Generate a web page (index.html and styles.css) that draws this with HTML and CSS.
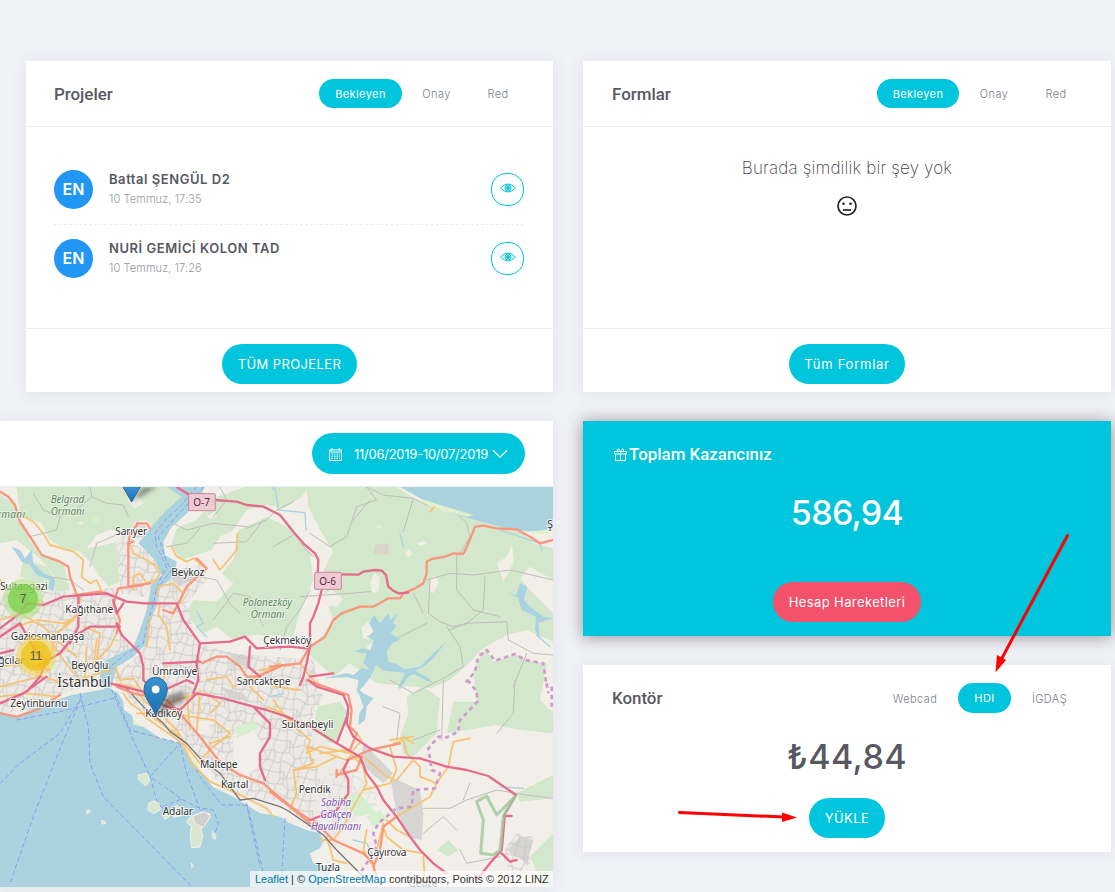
FILE: index.html
```html
<!DOCTYPE html>
<html lang="tr">
<head>
<meta charset="utf-8">
<title>Panel</title>
<link rel="stylesheet" href="styles.css">
</head>
<body>
<main class="page">
  <div class="col col-left">
    <section class="card projects">
      <header class="card-head">
        <h2 class="title">Projeler</h2>
        <nav class="tabs"><a class="tab active wide">Bekleyen</a><a class="tab onay">Onay</a><a class="tab red">Red</a></nav>
      </header>
      <div class="card-body list">
        <div class="item">
          <span class="avatar">EN</span>
          <div class="info"><span class="name">Battal ŞENGÜL D2</span><span class="date">10 Temmuz, 17:35</span></div>
          <a class="eye"><svg width="16" height="10" viewBox="0 0 16 10"><path d="M.6 5Q8-3 15.400 5Q8 13 .6 5Z"/><circle cx="8" cy="5" r="3"/><circle class="dot" cx="8" cy="5" r="1.400"/></svg></a>
        </div>
        <div class="item">
          <span class="avatar">EN</span>
          <div class="info"><span class="name">NURİ GEMİCİ KOLON TAD</span><span class="date">10 Temmuz, 17:26</span></div>
          <a class="eye"><svg width="16" height="10" viewBox="0 0 16 10"><path d="M.6 5Q8-3 15.400 5Q8 13 .6 5Z"/><circle cx="8" cy="5" r="3"/><circle class="dot" cx="8" cy="5" r="1.400"/></svg></a>
        </div>
      </div>
      <footer class="card-foot"><a class="btn btn-projects">TÜM PROJELER</a></footer>
    </section>

    <section class="card map-card">
      <header class="map-head">
        <a class="btn btn-date">
          <svg class="cal" width="13" height="13" viewBox="0 0 13 13"><path d="M.5 1.8h12v10.7H.5zM.5 4h12M3 0v3M10 0v3"/><path class="grid" d="M2.5 6h8.5M2.5 8.2h8.5M2.5 10.4h8.5"/></svg>
          <span>11/06/2019-10/07/2019</span>
          <svg class="chev" width="16" height="10" viewBox="0 0 16 10"><path d="M1 1.2l7 7 7-7"/></svg>
        </a>
      </header>
      <div class="map">
        <svg class="map-svg" width="553" height="400" viewBox="0 21 1659 1200">
          <defs>
            <pattern id="streets" width="110" height="96" patternUnits="userSpaceOnUse" patternTransform="rotate(12)">
              <path d="M0 14L24 8 40 26 70 12 110 14M0 50L30 44 48 60 84 46 110 50M0 80L20 72 52 84 80 76 110 80M12 0L18 30 8 58 12 96M40 0L36 26 50 60 40 96M66 0L72 20 62 50 76 74 66 96M94 0L88 34 100 60 94 96M24 8L30 44M84 46L80 76M52 84L48 60M18 30L36 26"/>
            </pattern>
            <filter id="soft" x="-50%" y="-50%" width="200%" height="200%"><feGaussianBlur stdDeviation="7"/></filter>
            <linearGradient id="pinfill" x1="0" y1="0" x2="0" y2="1"><stop offset="0" stop-color="#3a92d0"/><stop offset="1" stop-color="#1d6fb8"/></linearGradient>
          </defs>
          <rect class="land" y="21" width="1659" height="1200"/>

          <g class="wood">
            <path d="M50 21H580L560 58 520 70 490 120 460 145 440 120 405 125 380 170 360 155 330 150 290 165 260 205 290 200 350 185 375 215 370 300 325 320 300 290 275 250 240 215 190 205 150 180 125 130 60 105Z"/>
            <path d="M0 45L40 70 60 120 90 180 120 225 190 250 210 330 160 345 165 290 120 235 80 205 50 180 0 190Z"/>
            <path d="M70 235L140 260 180 320 130 350 110 310 60 290Z"/>
            <path d="M650 50L735 21H930L900 55 850 85 800 75 740 90 700 150 660 170 635 210 590 225 540 240 515 190 530 145 590 120Z"/>
            <path d="M715 150L800 110 880 150 930 220 940 300 900 390 880 470 760 465 700 480 650 440 610 460 555 405 580 360 650 365 700 310 665 280 700 240Z"/>
            <path d="M920 21L1190 21 1250 60 1335 95 1500 115 1560 150 1600 190 1659 205V300L1590 260 1560 295 1590 330 1659 400V485L1580 450 1520 465 1450 505 1395 560 1350 600 1290 625 1130 610 1050 550 1000 590 930 525 905 510 955 490 1000 420 980 360 960 290 1000 215 960 150 925 80Z"/>
            <path d="M1420 575L1455 508 1480 545 1545 522 1600 545 1640 550 1620 660 1659 700V760L1560 750 1490 735 1400 750 1340 760 1360 665 1430 665Z"/>
            <path d="M1220 650L1270 620 1320 655 1310 760 1240 830 1210 820 1200 770 1225 700Z"/>
            <path d="M950 680L1020 665 1050 710 1020 770 990 790 940 760ZM810 740L880 745 920 790 915 850 860 865 810 850Z"/>
            <path d="M640 720L690 695 735 705 730 735 690 755 650 745ZM820 765L840 760V860L810 825Z"/>
            <path d="M1550 940L1659 885V955L1560 965ZM1590 1130L1659 1060V1221H1630ZM1310 1110L1345 1080 1375 1110 1345 1130Z"/>
          </g>
          <g class="clearing">
            <path d="M1215 220l14-12 8 14-12 10zM1250 190l20-8 12 8-20 8zM1380 225l12-8 6 12zM1130 140l10-6 4 10zM940 210l25-20 20 25-15 30-22-8zM1110 310l14-34 16 18-4 40-18 6zM1085 440l26-20 8 30-14 30-16-6zM1100 500l22-16 10 30-22 8zM1290 300l16-14 10 20-16 34-12-6zM1490 250l30-20 16-36 6 50-20 40-12 20zM960 350l36-20 34 26-20 24-40-4zM1420 40l0 0zM380 60l30-12 24 20-30 18zM230 130l16-6 6 12zM620 110l20-14 12 12-20 10z"/>
          </g>

          <g class="urban">
            <path d="M0 350L90 325 240 340 350 320 355 450 400 520 340 590 240 625 190 640 80 695 0 700Z"/>
            <path d="M350 180L420 120 450 155 400 190 480 240 480 290 430 350 360 340Z"/>
            <path d="M470 310L600 250 620 300 560 370 590 490 700 520 940 540 950 590 970 650 930 730 1040 850 1080 960 1000 1110 850 970 720 945 650 900 590 830 500 740 400 670 340 590 420 520Z"/>
            <path class="ind" d="M1170 890L1260 930 1270 1000 1265 1080 1235 1075 1190 1000ZM1090 790L1180 880 1150 910 1080 850ZM520 270L570 262 590 290 540 320 515 300ZM690 520L760 530 750 560 700 555ZM660 620L730 640 745 660 690 655ZM1520 1110L1560 1070 1600 1080 1580 1150Z"/>
          </g>
          <g class="streets">
            <path d="M0 350L90 325 240 340 350 320 355 450 400 520 340 590 240 625 190 640 80 695 0 700Z"/>
            <path d="M350 180L420 120 450 155 400 190 480 240 480 290 430 350 360 340Z"/>
            <path d="M470 310L600 250 620 300 560 370 590 490 700 520 940 540 950 590 970 650 930 730 950 850 960 900 940 1010 900 1020 850 970 720 945 650 900 590 830 500 740 400 670 340 590 420 520Z"/>
            <path d="M1500 1120L1550 1060 1600 1070 1590 1150 1540 1190Z"/>
            <path d="M960 900L1040 850 1150 960 1000 1060Z" opacity=".5"/>
          </g>
          <path class="open" d="M700 780L760 750 785 790 770 860 740 890 700 850ZM580 730L630 720 625 760 590 765Z"/>
          <g class="parks">
            <path d="M275 115l18-5 8 15-18 6zM1020 950l60-10 50 60-60 10zM700 745l60-20 15 20-60 25zM150 555l18-8 6 20-18 4zM1100 1010l40-20 20 30-40 20z"/>
          </g>
          <path class="plot" d="M1125 195L1165 190 1165 225 1120 222Z"/>

          <g class="minor">
            <path d="M270 21L275 50 240 80 180 110 170 150 90 170M275 50L320 70 370 75 385 110M180 110L130 90 100 40M360 160L290 190 270 260M150 290L210 300 250 330M480 110L560 150 640 130 740 140M640 190L740 185 790 120M660 21L680 60 640 110"/>
            <path d="M1100 21L1150 45 1240 55 1280 75 1370 100 1400 130 1410 170 1380 220M1240 55L1210 155M1100 21L1130 60 1070 80 1040 170 990 200 930 160M1110 60L1060 120M1280 300L1350 280 1420 285 1530 270 1659 300M1370 220L1370 330 1420 390 1500 410M1290 300L1285 400 1320 425 1360 440 1400 430 1450 390 1455 290M1240 340L1270 400M1190 475L1280 430M1350 450L1400 430 1520 425 1525 480 1600 520 1659 525M1340 440L1380 500 1390 560 1320 600 1240 640 1170 600"/>
            <path d="M930 330L900 390 860 440 840 510M900 350L1050 340 1110 335M820 200L880 165M900 190L940 230M1150 680L1200 700 1190 780M1330 600L1325 780M1240 780L1320 750M1270 985L1350 985 1400 960 1490 930 1580 945 1659 955M1490 760L1540 700 1545 600M1580 520L1540 620M1270 1060L1330 1010 1370 1050M1380 1110L1400 1150 1500 1130M1410 910L1390 960"/>
            <path d="M740 145L800 120 830 90 880 65M600 290L650 300 690 370 720 400M640 420L700 340 750 350 790 440M500 200L560 190 600 145"/>
          </g>

          <g class="sea">
            <path d="M0 695L50 710 110 680 185 655 215 645 290 632 330 625 355 640 370 665 372 690 395 705 405 735 430 740 480 775 540 790 590 860 640 922 700 950 780 1000 815 1005 840 1010 870 1030 920 1050 960 1060 970 1085 960 1105 930 1120 940 1150 1000 1160 980 1200 970 1221H0Z"/>
            <path d="M1200 21H1659V145L1600 158 1500 140 1390 110 1330 90 1260 55Z"/>
            <path d="M500 21H615L590 70 550 110 515 140 490 185 495 225 530 245 525 285 480 325 470 370 450 430 440 490 400 530 350 560 335 620 320 640 300 600 305 550 330 535 400 500 420 450 440 390 455 310 485 285 465 240 415 190 455 140 500 90 545 50Z"/>
            <path d="M1107 430L1122 405 1140 430 1165 400 1172 420 1195 398 1178 430 1190 436 1172 460 1200 478 1175 492 1160 515 1165 545 1190 552 1215 568 1260 560 1300 520 1338 486 1300 535 1270 560 1245 572 1280 590 1302 612 1240 582 1225 590 1200 628 1195 622 1215 578 1150 572 1128 555 1112 590 1085 625 1070 640 1075 600 1040 592 970 595 1040 580 1060 585 1085 565 1110 570 1090 548 1100 520 1065 515 1085 505 1112 510 1120 480 1100 470 1122 455Z"/>
            <path d="M1068 622L1090 640 1120 655 1100 680 1095 720 1075 735 1078 700 1090 680 1080 650Z"/>
            <path d="M1525 340L1548 345 1560 310 1582 320 1572 360 1590 380 1630 410 1659 415 1615 428 1620 480 1605 450 1608 410 1565 390 1555 355Z"/>
            <path d="M35 200L60 210 75 235 95 210 100 250 130 280 165 295 160 335 145 325 150 300 110 285 90 255 65 245Z"/>
          </g>
          <g class="stream">
            <path d="M825 21L835 90 915 98 918 150M590 395L610 430 590 440 620 470M1060 1080L1100 1090 1120 1130M1650 500L1610 465M1210 200L1200 160M200 530L240 600M820 30L810 0M810 650L850 640M1500 920L1570 925M1500 150L1620 190 1625 210"/>
          </g>
          <g class="isle">
            <path d="M415 885l25-5 12 20-15 18-22-20zM448 968l15-5 15 8 3 18-20 12-17-12zM515 990l12-15 20 12-5 20-20 5zM572 1010l30-12 28 3-15 35-12 10 5 25-8 30-25 2-5-40 5-25-15-10zM260 992l8-3 3 8-8 4zM305 1022l9 1 3 7-9 2zM638 1055l10 12-3 12-8-8zM575 1150l6 8-5 4zM490 1000l20 8-15 10z"/>
            <path class="grey" d="M580 1008L612 995 632 1008 610 1043 585 1030Z"/>
          </g>
          <path class="shore" d="M560 800L600 865 575 850ZM400 720L425 735 400 735ZM1250 52L1320 75 1420 105 1400 110 1290 80ZM1570 155L1650 150 1640 165Z"/>

          <g class="ferry">
            <path d="M590 21L540 80 500 115 465 160 470 200 500 260 475 310 460 370 440 440 430 490 380 520 330 560 325 620M610 21L520 120 475 170 500 245 515 270 460 340"/>
            <path d="M0 910L60 850 180 760 245 650 170 830 100 1010 30 1210M240 640L265 740 270 850 310 950 575 1220M50 720L180 695 340 655M335 630L365 700 400 780 450 890 470 960 490 990M345 640L390 750 540 790 450 890 550 960 610 990M540 790L560 880 600 990M545 790L600 890 665 975 740 975 780 1160M610 985L640 990 655 1030 645 1060M740 970L760 1050 790 1180M855 1015L845 1190M490 980L550 955"/>
          </g>

          <g class="tertiary">
            <path d="M0 300L40 340 90 370 120 360M0 420L60 400 130 440 180 490 230 530M50 440L110 420 190 430 250 400M110 580L150 530 170 460 220 420M240 350L235 400 190 440M180 450L150 480 190 540 230 590M250 440L300 460 290 540 330 500 360 440M0 560L80 550 150 570M0 620L120 590 200 610 330 570M0 650L80 640 170 650M260 500L255 590M290 480L280 560"/>
            <path d="M65 105L100 125 130 160 150 195 220 215 250 240 245 290 270 310 290 300 305 335M390 190L400 220 440 240 470 260 480 280 460 310M515 200L530 230 560 245 580 235 610 260M640 240L660 270 710 210 712 160M400 330L400 290 420 280 440 310 460 300M470 350L475 320 520 310 550 340 540 370M480 370L475 405 500 440 510 510M450 410L440 500M1290 95L1303 80"/>
            <path d="M345 560L360 600 400 595 430 640M370 640L390 670 420 690 440 715 520 770 550 795 575 850 630 905 700 935 800 985 820 1010M350 610L400 620 430 660 480 700 530 750 560 800 600 850M410 700L440 700 540 770M500 560L480 640 520 700 570 710 640 720 690 760 640 800 610 830M480 680L560 650 620 640 660 670 630 700M560 640L570 750M600 630L590 760M620 600L680 590 700 620 780 590 840 550M630 790L690 770M780 570L900 550M800 680L850 700 880 730M750 620L790 660"/>
            <path d="M810 560L900 550 930 590 960 620M820 620L900 630M820 660L870 730 930 780 920 820 960 800 1050 820M920 800L940 850 880 870 890 940 870 990M880 870L950 860 1010 830M920 800L1040 840 1090 830 1160 890 1190 900 1240 840M960 820L1040 810 1080 850M1050 830L1020 880M1085 840L1100 910 1060 980 1030 1040 1000 1080 960 1080M1070 760L1085 780 1060 810M1170 800L1190 870 1170 910 1090 930M1180 790L1210 780 1220 820 1260 860 1260 890 1310 910M1240 790L1210 770M1410 775L1360 785 1345 860 1310 910 1290 950 1240 980 1190 1010 1150 1040 1160 1070 1210 1110 1270 1120M1160 1020L1190 1050 1230 1070M1170 780L1240 770M980 1070L1000 1140 1040 1150M1100 1050L1090 1110 1120 1160M1150 1030L1130 1110M1270 1120L1275 1221"/>
          </g>
          <g class="rail"><path d="M375 620L430 680 490 730 510 755 560 790 600 835 660 880 690 920 720 960 760 955 840 980 860 990 920 1030 970 1065 1010 1110 1060 1160 1100 1200"/></g>

          <g class="primary">
            <path d="M0 35L25 50 45 75 60 125 100 185 125 225 180 245 205 260 210 290 230 345 300 335 330 345M410 130L440 130 450 145M385 190L390 160 415 130M400 185L385 190 385 320 450 310M340 370L355 325 430 315M340 370L360 420 350 460M590 235L620 265 560 320 520 400 490 390M0 700L50 710 110 690 180 645M350 620L400 640 500 660 540 700 600 770 650 835 680 860 720 885 790 910 830 945 880 985 930 1020M605 550L650 530 680 530 720 560 740 590 770 590 840 560M920 600L960 615 1045 645 1055 690 1050 740 1070 760 1050 810M810 560L900 550 930 500 975 470 1000 420 1025 400 1080 380 1120 380 1130 375 1165 355 1200 355 1210 340 1245 325 1270 310 1280 280 1280 245 1295 237 1335 230 1360 220 1390 222 1405 190 1425 140 1450 137 1490 145 1550 148 1590 170 1620 190 1659 180M940 1020L1000 1080 1090 1120 1120 1150M1190 1010L1150 1040 1140 1110 1120 1160 1130 1190M1040 840L1110 810 1200 790"/>
            <path d="M810 935L870 980 930 1030M1010 870L1010 890M1085 830L1070 870 1010 885"/>
          </g>
          <g class="motor">
            <path d="M530 21L560 40 600 65M645 60L710 65 740 75 790 80 840 105 880 155 910 190 945 220 955 240 953 280M1020 283L1075 284 1090 275 1125 270 1145 272 1158 285 1165 320 1180 332 1195 340 1225 338M965 330L955 370 940 410 930 430 930 500 920 550 910 590 900 615M0 445L60 400 80 370 130 375 190 350 320 340 380 365 435 370 530 370 550 420 600 490 590 550 595 600 580 640M600 490L690 485 735 470 770 505 870 500 920 505M750 500L745 560 780 590M0 470L60 430 110 520 140 540 120 590 80 635M110 560L180 520 220 470 270 440 360 440M350 430L365 465 420 520 430 560 430 600 470 640 560 600 580 610M0 670L70 640 140 590M330 610L430 635 500 680 540 690 590 640 670 655 760 680 800 690 860 710 930 740 1010 790 1080 830M760 680L780 700 810 730 810 770 780 820 780 860 795 900M490 550L600 545M235 350L235 440 210 490M925 600L950 620 1030 645 1045 680 1040 730 1060 770 1110 805 1180 830 1260 835 1340 860 1400 870 1465 888 1548 945M1045 700L1010 790M1080 830L1100 880 1130 920 1150 960 1190 1010 1230 1070 1260 1110 1300 1150 1340 1180M1548 945L1515 1000 1505 1110 1470 1150 1430 1200M1505 1120L1530 1145 1550 1140M1510 1008L1535 1008M1045 840L1030 870 1045 900 1045 940 1010 990 930 1020M1000 580L930 590M0 520L40 510M340 360L350 400 370 370"/>
          </g>
          <g class="boundary"><path d="M1403 600L1400 605 1425 575 1435 530 1460 510 1485 542 1545 522 1575 540 1630 550 1640 620M1403 600L1430 635 1432 665 1380 720 1375 755 1340 772 1315 770 1285 805 1295 870 1320 880 1305 925 1240 930 1235 980 1190 985 1135 1030 1120 1060 1130 1100 1100 1150 1080 1180M1640 610L1645 640M1655 620V680"/></g>
          <path class="reserve" d="M1430 965L1460 948 1490 1005 1545 950 1510 1010 1500 1110 1480 1125 1442 1120 1450 1020Z"/>

          <g class="shield"><rect x="566" y="41" width="80" height="51" rx="4"/><rect x="944" y="277" width="80" height="51" rx="4"/></g>
          <g class="shield-text"><text x="580" y="77" textLength="50">O-7</text><text x="958" y="314" textLength="50">O-6</text></g>

          <g class="wood-label">
            <text x="152" y="70" textLength="101">Belgrad</text><text x="152" y="105" textLength="101">Ormanı</text>
            <text x="-32" y="113" textLength="107">Ormanı</text>
            <text x="728" y="379" textLength="148">Polonezköy</text><text x="752" y="414" textLength="101">Ormanı</text>
          </g>
          <g class="place">
            <text x="346" y="165" textLength="96">Sarıyer</text><text x="514" y="287" textLength="99">Beykoz</text>
            <text x="0" y="329" textLength="143">Sultangazi</text><text x="196" y="399" textLength="144">Kağıthane</text>
            <text x="32" y="479" textLength="221">Gaziosmanpaşa</text><text x="-42" y="551" textLength="115">Bağcılar</text>
            <text x="214" y="567" textLength="111">Beyoğlu</text><text x="456" y="584" textLength="136">Ümraniye</text>
            <text x="790" y="492" textLength="144">Çekmeköy</text><text x="710" y="615" textLength="162">Sancaktepe</text>
            <text x="31" y="680" textLength="171">Zeytinburnu</text><text x="436" y="712" textLength="111">Kadıköy</text>
            <text x="600" y="865" textLength="113">Maltepe</text><text x="663" y="924" textLength="82">Kartal</text>
            <text x="488" y="1004" textLength="91">Adalar</text><text x="845" y="745" textLength="155">Sultanbeyli</text>
            <text x="896" y="938" textLength="96">Pendik</text><text x="1102" y="1129" textLength="118">Çayırova</text>
            <text x="948" y="1174" textLength="72">Tuzla</text><text x="1642" y="144">Şile</text><text x="1225" y="1220" textLength="88">Gebze</text>
            <text class="city" x="172" y="621" textLength="160">İstanbul</text>
          </g>
          <g class="airport"><text x="963" y="978" textLength="90">Sabiha</text><text x="961" y="1014" textLength="94">Gökçen</text><text x="933" y="1050" textLength="150">Havalimanı</text></g>

          <g class="pin-shadow"><path d="M395 66L430 21 470 21Z"/><path d="M467 705L500 650 550 630 555 660Z"/></g>
          <g class="pin">
            <path d="M369 21L395 66 421 21Z"/>
            <path d="M467 706C458 680 432 655 432 627A35 35 0 0 1 502 627C502 655 476 680 467 706Z"/>
            <circle cx="467" cy="628" r="13"/>
          </g>
          <g class="cluster">
            <circle class="g-out" cx="69" cy="357" r="60"/><circle class="g-in" cx="69" cy="357" r="45"/><text x="69" y="368">7</text>
            <circle class="y-out" cx="108" cy="528" r="60"/><circle class="y-in" cx="108" cy="528" r="45"/><text x="108" y="539">11</text>
          </g>
        </svg>
        <div class="credit"><a>Leaflet</a> | © <a>OpenStreetMap</a> contributors, Points © 2012 LINZ</div>
      </div>
    </section>
  </div>

  <div class="col col-right">
    <section class="card forms">
      <header class="card-head">
        <h2 class="title">Formlar</h2>
        <nav class="tabs"><a class="tab active wide">Bekleyen</a><a class="tab onay">Onay</a><a class="tab red">Red</a></nav>
      </header>
      <div class="card-body empty">
        <p class="empty-text">Burada şimdilik bir şey yok</p>
        <svg class="face" width="20" height="20" viewBox="0 0 20 20"><circle cx="10" cy="10" r="9"/><path d="M6 14h8"/><circle class="dot" cx="6.5" cy="7.8" r="1.3"/><circle class="dot" cx="13.5" cy="7.8" r="1.3"/></svg>
      </div>
      <footer class="card-foot"><a class="btn btn-forms">Tüm Formlar</a></footer>
    </section>

    <section class="card earnings">
      <h2 class="earn-title"><svg width="13" height="13" viewBox="0 0 13 13"><path d="M.5 3.5h12v2.500H.5zM1.500 6v6.500h10V6M6.500 3.500v9M6.500 3.300C5 0 2.500.4 3.400 3.300M6.500 3.300C8 0 10.500.4 9.600 3.300"/></svg><span>Toplam Kazancınız</span></h2>
      <div class="amount earn-amount">586,94</div>
      <a class="btn btn-account">Hesap Hareketleri</a>
    </section>

    <section class="card credits">
      <header class="credit-head">
        <h2 class="title">Kontör</h2>
        <nav class="tabs"><a class="tab webcad">Webcad</a><a class="tab active hdi">HDI</a><a class="tab igdas">İGDAŞ</a></nav>
      </header>
      <div class="amount credit-amount">₺44,84</div>
      <a class="btn btn-load">YÜKLE</a>
    </section>
  </div>
  <svg class="arrows" width="1115" height="892" viewBox="0 0 1115 892"><path d="M1067.500 535.500L1001 660M679.500 812.500L784 817"/><path class="tip" d="M995.500 672.500L997 655 1006 660ZM797 817.500L782 812.500 782 822Z"/></svg>
</main>
</body>
</html>
```
FILE: styles.css
```css
* { box-sizing: border-box; }
body { margin: 0; background: #f1f2f7; font-family: Inter, "Open Sans", sans-serif; color: #575962; overflow: hidden; }
.page { position: relative; display: flex; gap: 30px; width: 1115px; height: 892px; padding-top: 61px; overflow: hidden; }
.col { display: flex; flex-direction: column; gap: 29px; }
.col-left { width: 553px; }
.col-right { width: 528px; }
.card { background: #fff; box-shadow: 0 1px 15px 1px rgba(69, 65, 78, .08); }
.projects { margin-left: 26px; }
.projects, .forms { height: 331px; display: flex; flex-direction: column; }
.card-head { height: 66px; flex: none; padding: 0 28px; display: flex; align-items: center; justify-content: space-between; border-bottom: 1px solid #ebedf2; }
.forms .card-head, .credit-head { padding-left: 29px; }
.title { margin: 0; font: 500 16.9px Roboto, sans-serif; color: #575962; }
.tabs { display: flex; align-items: center; font-size: 11px; color: #7b7e8a; font-weight: 300; letter-spacing: .4px; }
.tab { height: 29px; line-height: 30px; text-align: center; white-space: nowrap; }
.tab.active { background: #00c5dc; color: #fff; border-radius: 15px; font-weight: 400; }
.wide { width: 83px; }
.onay { width: 69px; }
.red { width: 54px; }
.forms .wide { width: 82px; }
.forms .onay { width: 70px; }
.card-body { flex: 1; }
.list { padding: 28px 29px 0 28px; }
.item { height: 69px; display: flex; align-items: center; }
.item + .item { height: 68px; border-top: 1px dashed #ebedf2; }
.avatar { width: 39px; height: 39px; border-radius: 50%; background: #2196f3; color: #fff; font-weight: 600; font-size: 16px; line-height: 39px; text-align: center; }
.info { margin-left: 16px; display: flex; flex-direction: column; flex: 1; line-height: 18px; gap: 2px; padding-bottom: 1px; }
.name { font-size: 13px; font-weight: 600; letter-spacing: .55px; }
.date { font-size: 11px; font-weight: 300; color: #9699a2; letter-spacing: .1px; }
.eye { width: 33px; height: 33px; border: 1px solid #00c5dc; border-radius: 15px; display: flex; justify-content: center; padding-top: 9px; }
.eye svg { fill: none; stroke: #00c5dc; stroke-width: 1; }
.eye .dot { fill: #00c5dc; }
.card-foot { height: 64px; flex: none; border-top: 1px solid #ebedf2; padding-top: 15px; display: flex; justify-content: center; }
.btn { display: flex; align-items: center; justify-content: center; height: 40px; border-radius: 20px; background: #00c5dc; color: #fff; font-size: 13px; letter-spacing: .4px; white-space: nowrap; }
.btn-projects { width: 135px; }
.btn-forms { width: 116px; letter-spacing: .75px; }
.map-card { height: 466px; }
.map-head { height: 66px; border-bottom: 1px solid #ebedf2; padding: 12px 28px 0 0; display: flex; justify-content: flex-end; }
.btn-date { width: 213px; height: 41px; border-radius: 21px; letter-spacing: -.25px; }
.btn-date svg { fill: none; stroke: #fff; }
.btn-date .grid { stroke-dasharray: 1.5 1; stroke-width: 1.2; }
.cal { margin: 2px 12px 0 0; }
.chev { margin-left: 4px; stroke-width: 1.3; }
.map { position: relative; height: 400px; }
.map-svg { display: block; font-family: "Noto Sans", sans-serif; }
.map-svg path { fill: none; stroke-linejoin: round; stroke-linecap: round; }
.land { fill: #f2efe9; }
.map-svg .wood path { fill: #d3e7cc; }
.map-svg .clearing path { fill: #f0eee5; }
.map-svg .urban path { fill: #edeae5; }
.map-svg .urban .ind { fill: #d6d5d4; }
.map-svg .streets path { fill: url(#streets); }
#streets path { fill: none; stroke: #c8c8c7; stroke-width: 2.6; }
.map-svg .open { fill: #f2efe9; }
.map-svg .parks path { fill: #d5efcf; }
.map-svg .plot { fill: #d9d5c9; }
.minor { stroke: #bdbebb; stroke-width: 3; }
.map-svg .sea path { fill: #aad3df; }
.stream { stroke: #aad3df; stroke-width: 4; }
.map-svg .isle path { fill: #d8e8d0; stroke: #f2efe9; stroke-width: 3; }
.map-svg .isle .grey { fill: #cfcfcf; }
.map-svg .shore { fill: #e3f0cd; }
.ferry { stroke: #8c9eed; stroke-width: 3; stroke-dasharray: 12 10; }
.tertiary { stroke: #f5c477; stroke-width: 5.5; }
.rail { stroke: #777; stroke-width: 4; }
.primary { stroke: #f8977b; stroke-width: 7; }
.motor { stroke: #e56b8a; stroke-width: 7; }
.boundary { stroke: #cf9bcb; stroke-width: 8; stroke-dasharray: 13 11; }
.map-svg .boundary path { stroke-linecap: butt; }
.reserve { stroke: #9dc79e; stroke-width: 9; opacity: .8; }
.shield { fill: #eccbd3; stroke: #d08599; stroke-width: 3; }
.shield-text { font-size: 30px; fill: #65233b; }
.wood-label { font-size: 30px; font-style: italic; fill: #5d8560; stroke: #eef5e9; stroke-width: 4; paint-order: stroke; }
.place { font-size: 31px; fill: #333; stroke: #fff; stroke-opacity: .75; stroke-width: 6; paint-order: stroke; }
.city { font-size: 42px; }
.airport { font-size: 30px; font-style: italic; fill: #7a52b3; stroke: #fff; stroke-opacity: .7; stroke-width: 5; paint-order: stroke; }
.map-svg .pin-shadow path { fill: #333; opacity: .5; filter: url(#soft); }
.map-svg .pin path { fill: url(#pinfill); stroke: #2e6c97; stroke-width: 3; }
.pin circle { fill: #fff; stroke: #2e6c97; stroke-width: 2; }
.cluster { font: 36px "Liberation Sans", sans-serif; text-anchor: middle; }
.cluster text { font-size: 36px; fill: #555; }
.g-out { fill: rgba(181, 226, 140, .6); }
.g-in { fill: rgba(110, 204, 57, .65); }
.y-out { fill: rgba(241, 211, 87, .6); }
.y-in { fill: rgba(240, 194, 12, .7); }
.credit { position: absolute; right: 0; bottom: 0; width: 303px; height: 16px; line-height: 16px; padding-left: 5px; background: rgba(255, 255, 255, .7); font-family: "Liberation Sans", sans-serif; font-size: 11px; color: #333; white-space: nowrap; }
.credit a { color: #0078a8; }
.empty { display: flex; flex-direction: column; align-items: center; padding-top: 28px; }
.empty-text { margin: 0; font-size: 17px; font-weight: 250; line-height: 26px; color: #3f4047; letter-spacing: .15px; }
.face { margin-top: 15px; fill: none; stroke: #212529; stroke-width: 1.7; }
.face .dot { fill: #212529; stroke: none; }
.earnings { height: 215px; background: #00c5dc; color: #fff; box-shadow: 0 1px 15px 1px rgba(69, 65, 78, .5); display: flex; flex-direction: column; align-items: center; }
.earn-title { align-self: flex-start; margin: 23px 0 0 31px; height: 20px; display: flex; align-items: center; gap: 2px; font: 500 16.9px Roboto, sans-serif; }
.earn-title svg { fill: none; stroke: #fff; stroke-width: 1; }
.amount { font-size: 34px; font-weight: 450; line-height: 40px; }
.earn-amount { margin-top: 29px; letter-spacing: -.7px; }
.btn-account { width: 148px; background: #f4516c; margin-top: 49px; }
.credits { height: 187px; display: flex; flex-direction: column; align-items: center; }
.credit-head { width: 100%; height: 66px; padding-right: 28px; display: flex; align-items: center; justify-content: space-between; }
.webcad { width: 86px; }
.hdi { width: 53px; height: 30px; }
.igdas { width: 77px; margin-right: -5px; }
.credit-amount { margin-top: 6px; letter-spacing: .4px; }
.btn-load { width: 76px; margin-top: 21px; }
.arrows { position: absolute; left: 0; top: 0; pointer-events: none; fill: none; stroke: red; stroke-width: 3; stroke-linecap: round; }
.arrows .tip { fill: red; stroke: none; }
```
